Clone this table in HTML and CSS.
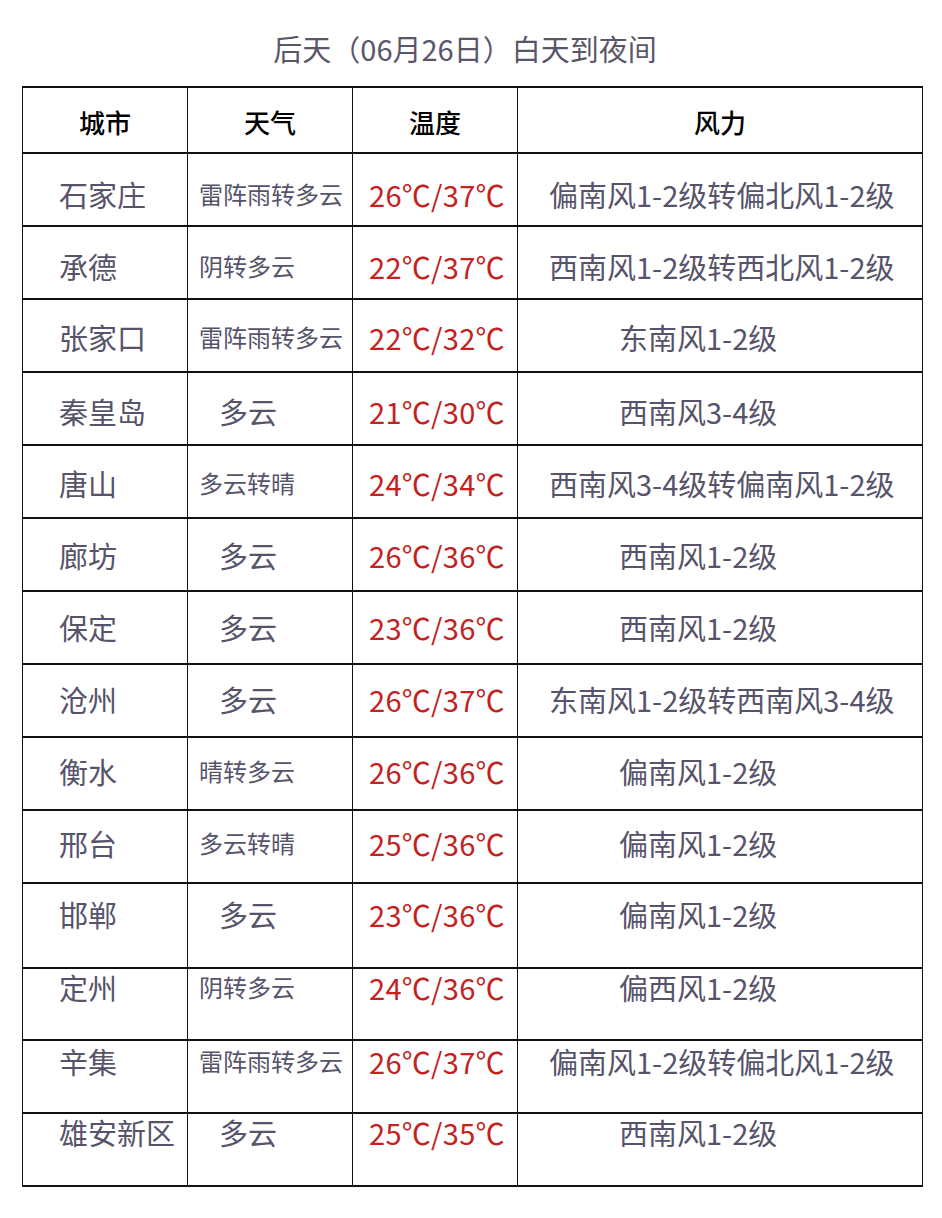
FILE: index.html
```html
<!DOCTYPE html>
<html lang="zh-CN">
<head>
<meta charset="utf-8">
<title>后天（06月26日）白天到夜间</title>
<link rel="stylesheet" href="styles.css">
</head>
<body>
<h1 class="title">后天（06月26日）白天到夜间</h1>
<div class="table">
  <div class="row head">
    <div class="cell">城市</div>
    <div class="cell">天气</div>
    <div class="cell">温度</div>
    <div class="cell">风力</div>
  </div>
  <div class="row">
    <div class="cell city">石家庄</div>
    <div class="cell wx">雷阵雨转多云</div>
    <div class="cell temp">26℃/37℃</div>
    <div class="cell wind">偏南风1-2级转偏北风1-2级</div>
  </div>
  <div class="row">
    <div class="cell city">承德</div>
    <div class="cell wx">阴转多云</div>
    <div class="cell temp">22℃/37℃</div>
    <div class="cell wind">西南风1-2级转西北风1-2级</div>
  </div>
  <div class="row">
    <div class="cell city">张家口</div>
    <div class="cell wx">雷阵雨转多云</div>
    <div class="cell temp">22℃/32℃</div>
    <div class="cell wind short">东南风1-2级</div>
  </div>
  <div class="row">
    <div class="cell city">秦皇岛</div>
    <div class="cell wx big">多云</div>
    <div class="cell temp">21℃/30℃</div>
    <div class="cell wind short">西南风3-4级</div>
  </div>
  <div class="row">
    <div class="cell city">唐山</div>
    <div class="cell wx">多云转晴</div>
    <div class="cell temp">24℃/34℃</div>
    <div class="cell wind">西南风3-4级转偏南风1-2级</div>
  </div>
  <div class="row">
    <div class="cell city">廊坊</div>
    <div class="cell wx big">多云</div>
    <div class="cell temp">26℃/36℃</div>
    <div class="cell wind short">西南风1-2级</div>
  </div>
  <div class="row">
    <div class="cell city">保定</div>
    <div class="cell wx big">多云</div>
    <div class="cell temp">23℃/36℃</div>
    <div class="cell wind short">西南风1-2级</div>
  </div>
  <div class="row">
    <div class="cell city">沧州</div>
    <div class="cell wx big">多云</div>
    <div class="cell temp">26℃/37℃</div>
    <div class="cell wind">东南风1-2级转西南风3-4级</div>
  </div>
  <div class="row">
    <div class="cell city">衡水</div>
    <div class="cell wx">晴转多云</div>
    <div class="cell temp">26℃/36℃</div>
    <div class="cell wind short">偏南风1-2级</div>
  </div>
  <div class="row">
    <div class="cell city">邢台</div>
    <div class="cell wx">多云转晴</div>
    <div class="cell temp">25℃/36℃</div>
    <div class="cell wind short">偏南风1-2级</div>
  </div>
  <div class="row tall">
    <div class="cell city">邯郸</div>
    <div class="cell wx big">多云</div>
    <div class="cell temp">23℃/36℃</div>
    <div class="cell wind short">偏南风1-2级</div>
  </div>
  <div class="row">
    <div class="cell city">定州</div>
    <div class="cell wx">阴转多云</div>
    <div class="cell temp">24℃/36℃</div>
    <div class="cell wind short">偏西风1-2级</div>
  </div>
  <div class="row">
    <div class="cell city">辛集</div>
    <div class="cell wx">雷阵雨转多云</div>
    <div class="cell temp">26℃/37℃</div>
    <div class="cell wind">偏南风1-2级转偏北风1-2级</div>
  </div>
  <div class="row">
    <div class="cell city">雄安新区</div>
    <div class="cell wx big">多云</div>
    <div class="cell temp">25℃/35℃</div>
    <div class="cell wind short">西南风1-2级</div>
  </div>
</div>
</body>
</html>
```
FILE: styles.css
```css
html, body {
  margin: 0;
  padding: 0;
  background: #ffffff;
}

body {
  font-family: "Noto Sans CJK SC", "Noto Sans", sans-serif;
  color: #56536a;
}

.title {
  margin: 0 0 18px 0;
  padding: 28px 12px 0 0;
  font-size: 29px;
  font-weight: 400;
  line-height: 40px;
  text-align: center;
  color: #5a566a;
}

.table {
  margin-left: 22px;
  width: 901px;
  box-sizing: border-box;
  border-top: 2px solid #111;
  border-left: 1px solid #111;
}

.row {
  display: grid;
  grid-template-columns: 165px 165px 165px 405px;
  height: 73px;
  box-sizing: border-box;
  border-bottom: 2px solid #111;
}

.cell {
  box-sizing: border-box;
  border-right: 1px solid #111;
  font-size: 29px;
  line-height: 32px;
  white-space: nowrap;
  padding-top: 20px;
}

.head {
  height: 66px;
}

.head .cell {
  text-align: center;
  font-size: 26px;
  font-weight: 500;
  color: #000;
  padding-top: 18px;
}

.tall {
  height: 85px;
}

.city {
  padding-left: 36px;
}

.wx {
  font-size: 24px;
  padding-left: 11px;
}

.wx.big {
  font-size: 29px;
  padding-left: 31px;
}

.temp {
  color: #c3221e;
  padding-left: 16px;
  letter-spacing: 0.3px;
}

.wind {
  padding-left: 31px;
}

.wind.short {
  padding-left: 101px;
}

.row:nth-child(2) .cell { padding-top: 24px; }
.row:nth-child(3) .cell { padding-top: 23px; }
.row:nth-child(4) .cell { padding-top: 21px; }
.row:nth-child(5) .cell { padding-top: 22px; }
.row:nth-child(6) .cell { padding-top: 21px; }
.row:nth-child(7) .cell { padding-top: 20px; }
.row:nth-child(8) .cell { padding-top: 19px; }
.row:nth-child(9) .cell { padding-top: 18px; }
.row:nth-child(10) .cell { padding-top: 17px; }
.row:nth-child(11) .cell { padding-top: 16px; }
.row:nth-child(12) .cell { padding-top: 14px; }
.row:nth-child(13) { height: 72px; }
.row:nth-child(13) .cell { padding-top: 2px; }
.row:nth-child(14) .cell { padding-top: 4px; }
.row:nth-child(15) .cell { padding-top: 2px; }
```
